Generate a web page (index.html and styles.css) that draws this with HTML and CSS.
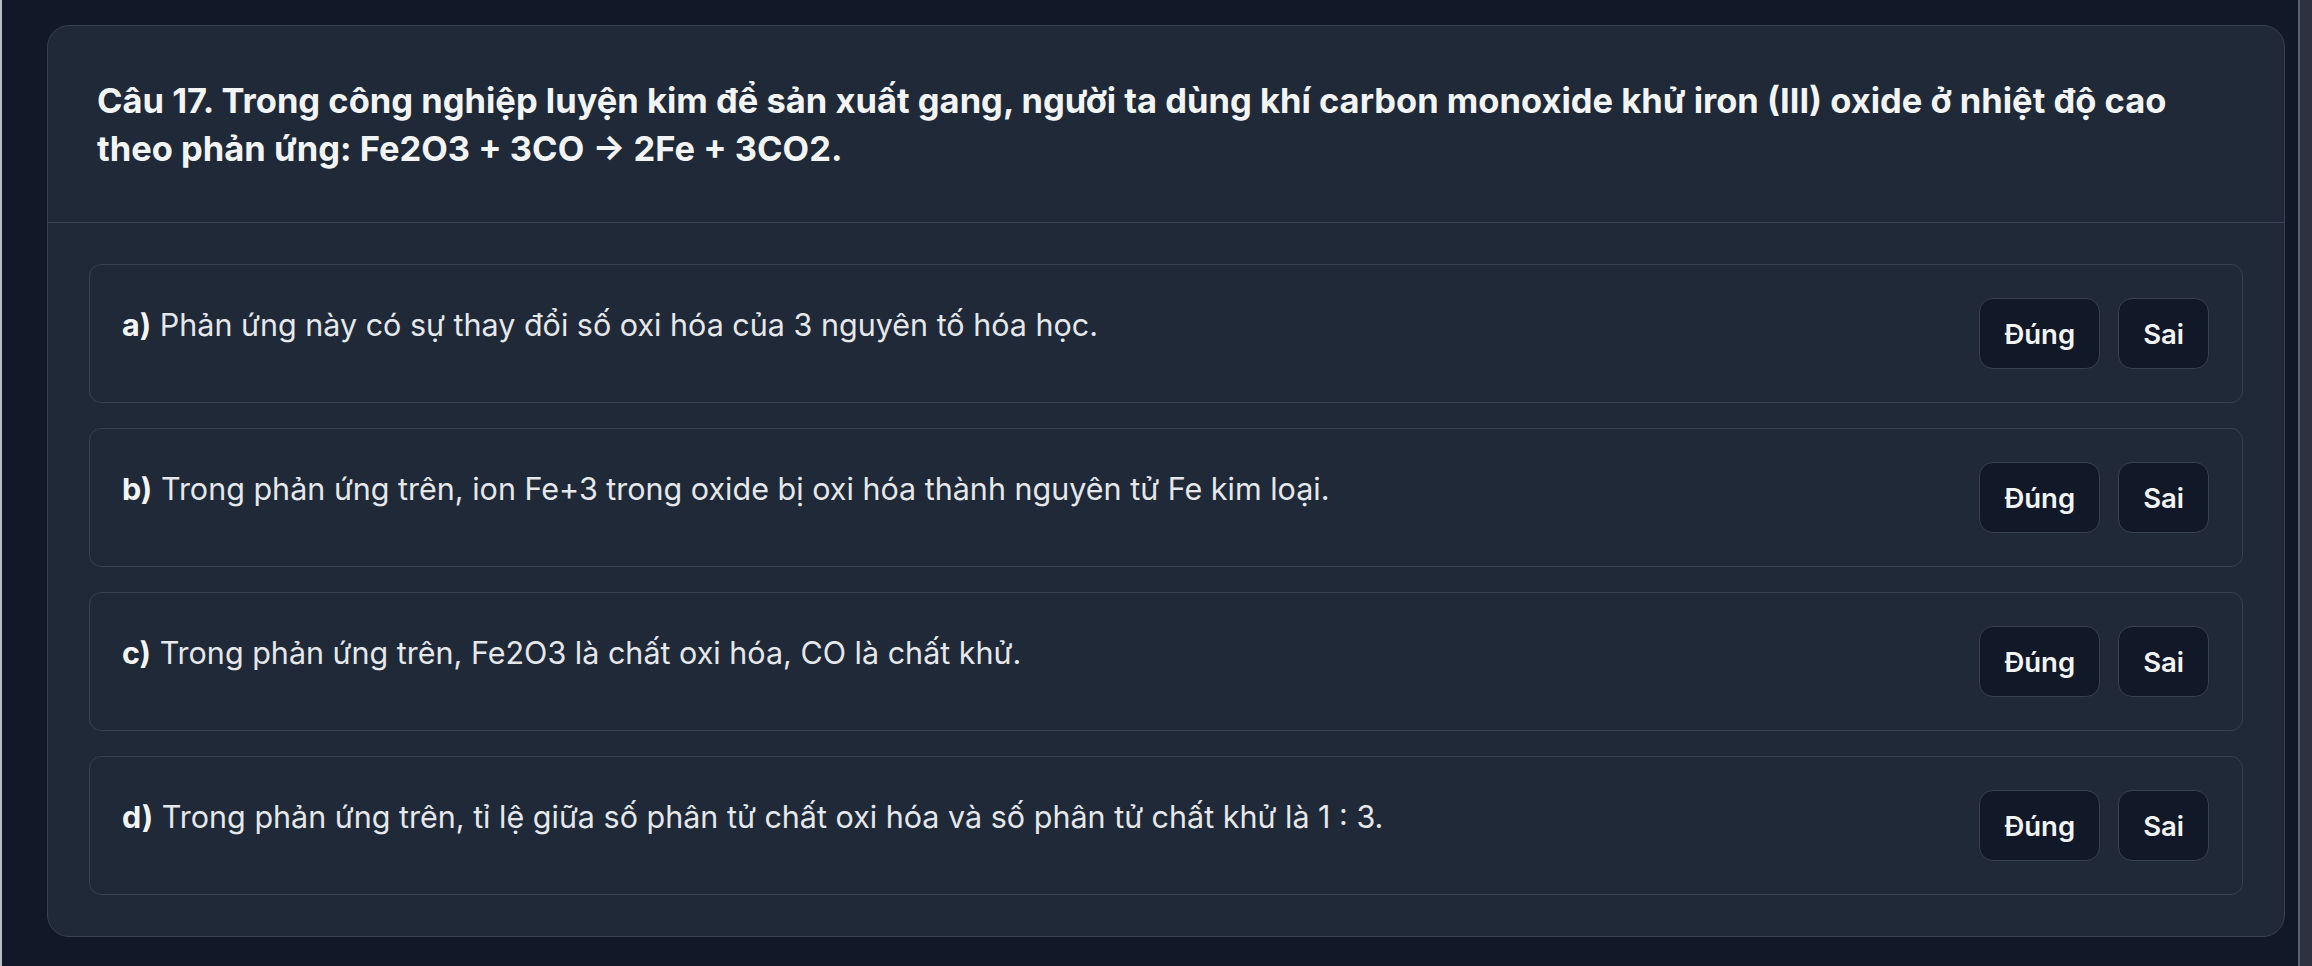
FILE: index.html
```html
<!DOCTYPE html>
<html lang="vi">
<head>
  <meta charset="UTF-8">
  <meta name="viewport" content="width=device-width, initial-scale=1.0">
  <title>Câu 17</title>
  <link rel="stylesheet" href="styles.css">
</head>
<body>
  <div class="edge"></div>
  <main class="page">
    <div class="question">
      <div class="question-head">
        <h2 class="question-title">Câu 17. Trong công nghiệp luyện kim để sản xuất gang, người ta dùng khí carbon monoxide khử iron (III) oxide ở nhiệt độ cao<br>theo phản ứng: Fe2O3 + 3CO → 2Fe + 3CO2.</h2>
      </div>
      <div class="statements">
        <div class="statement">
          <p class="statement-text"><b>a)</b> Phản ứng này có sự thay đổi số oxi hóa của 3 nguyên tố hóa học.</p>
          <div class="choices">
            <button class="choice">Đúng</button>
            <button class="choice">Sai</button>
          </div>
        </div>
        <div class="statement">
          <p class="statement-text"><b>b)</b> Trong phản ứng trên, ion Fe+3 trong oxide bị oxi hóa thành nguyên tử Fe kim loại.</p>
          <div class="choices">
            <button class="choice">Đúng</button>
            <button class="choice">Sai</button>
          </div>
        </div>
        <div class="statement">
          <p class="statement-text"><b>c)</b> Trong phản ứng trên, Fe2O3 là chất oxi hóa, CO là chất khử.</p>
          <div class="choices">
            <button class="choice">Đúng</button>
            <button class="choice">Sai</button>
          </div>
        </div>
        <div class="statement">
          <p class="statement-text"><b>d)</b> Trong phản ứng trên, tỉ lệ giữa số phân tử chất oxi hóa và số phân tử chất khử là 1 : 3.</p>
          <div class="choices">
            <button class="choice">Đúng</button>
            <button class="choice">Sai</button>
          </div>
        </div>
      </div>
    </div>
  </main>
  <div class="scrollbar"></div>
</body>
</html>
```

FILE: styles.css
```css
html, body {
  margin: 0;
  height: 100%;
}
body {
  display: flex;
  background-color: #111827;
  font-family: Inter, "Noto Sans", sans-serif;
  color: #f3f4f6;
  overflow: hidden;
}
.edge {
  width: 2px;
  background-color: #b9bcc2;
}
.page {
  flex: 1;
  padding: 25px 13px 0 45px;
}
.scrollbar {
  width: 12px;
  background-color: #2e3240;
  border-left: 2px solid #5d616c;
}
.question {
  background-color: #1f2937;
  border: 1px solid #374151;
  border-radius: 22px;
}
.question-head {
  padding: 51px 48px 49px 49px;
  border-bottom: 1px solid #374151;
}
.question-title {
  margin: 0;
  font-size: 34.5px;
  line-height: 48px;
  font-weight: 700;
  color: #f3f4f6;
}
.statements {
  display: flex;
  flex-direction: column;
  gap: 25px;
  padding: 41px;
}
.statement {
  display: flex;
  justify-content: space-between;
  align-items: flex-start;
  padding: 33px 33px 33px 32px;
  border: 1px solid #374151;
  border-radius: 12px;
}
.statement-text {
  margin: 0;
  font-size: 30.5px;
  line-height: 54px;
  color: #e5e7eb;
}
.statement-text b {
  font-weight: 700;
  color: #f3f4f6;
}
.choices {
  display: flex;
  gap: 18px;
}
.choice {
  height: 71px;
  padding: 0 24px;
  background-color: #111827;
  color: #f3f4f6;
  border: 1px solid #374151;
  border-radius: 14px;
  font-family: Inter, "Noto Sans", sans-serif;
  font-size: 27.5px;
  font-weight: 600;
  cursor: pointer;
}
```
